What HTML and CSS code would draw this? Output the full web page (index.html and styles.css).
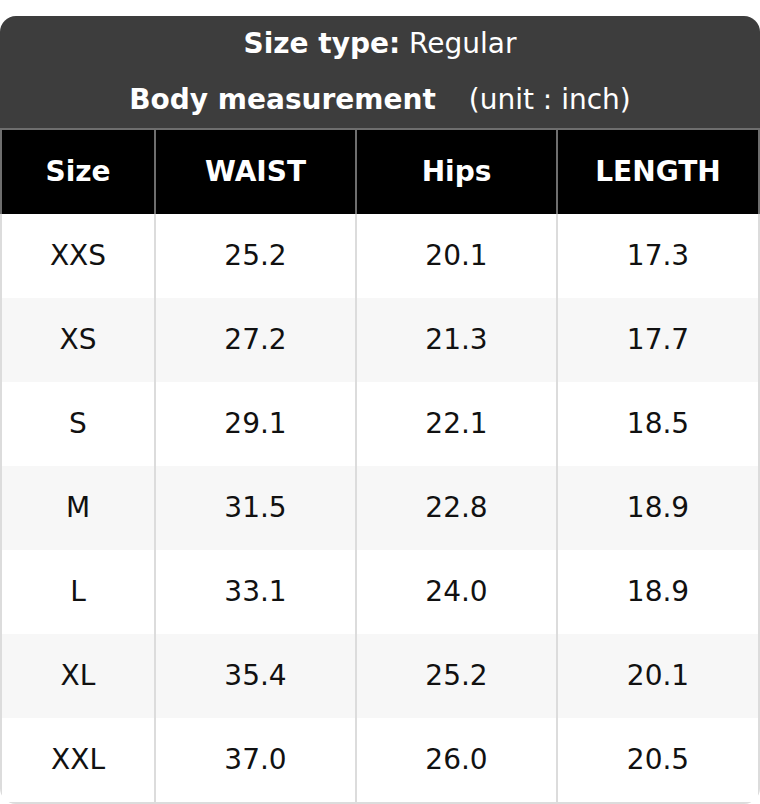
FILE: index.html
```html
<!DOCTYPE html>
<html>
<head>
<meta charset="utf-8">
<link rel="stylesheet" href="styles.css">
</head>
<body>
<div class="card">
  <div class="title">
    <div class="title-line"><b>Size type:</b> Regular</div>
    <div class="title-line"><b>Body measurement</b><span class="unit">(unit : inch)</span></div>
  </div>
  <div class="grid">
    <div class="cell head first">Size</div>
    <div class="cell head">WAIST</div>
    <div class="cell head">Hips</div>
    <div class="cell head last">LENGTH</div>

    <div class="cell first">XXS</div><div class="cell">25.2</div><div class="cell">20.1</div><div class="cell last">17.3</div>
    <div class="cell first alt">XS</div><div class="cell alt">27.2</div><div class="cell alt">21.3</div><div class="cell last alt">17.7</div>
    <div class="cell first">S</div><div class="cell">29.1</div><div class="cell">22.1</div><div class="cell last">18.5</div>
    <div class="cell first alt">M</div><div class="cell alt">31.5</div><div class="cell alt">22.8</div><div class="cell last alt">18.9</div>
    <div class="cell first">L</div><div class="cell">33.1</div><div class="cell">24.0</div><div class="cell last">18.9</div>
    <div class="cell first alt">XL</div><div class="cell alt">35.4</div><div class="cell alt">25.2</div><div class="cell last alt">20.1</div>
    <div class="cell first bottom">XXL</div><div class="cell bottom">37.0</div><div class="cell bottom">26.0</div><div class="cell last bottom">20.5</div>
  </div>
</div>
</body>
</html>
```
FILE: styles.css
```css
html, body {
  margin: 0;
  padding: 0;
  background: #ffffff;
}
body {
  font-family: "DejaVu Sans", sans-serif;
  font-size: 28px;
  color: #111111;
}
.card {
  margin-top: 16px;
  width: 760px;
  border-radius: 16px;
  overflow: hidden;
  background: #ffffff;
}
.title {
  background: #3d3d3d;
  color: #ffffff;
  border-bottom: 2px solid #6e6e6e;
}
.title-line {
  height: 56px;
  line-height: 56px;
  text-align: center;
}
.title-line b {
  font-weight: bold;
}
.unit {
  margin-left: 33px;
}
.grid {
  display: grid;
  grid-template-columns: 156px 201px 201px 202px;
}
.cell {
  height: 84px;
  padding-bottom: 2px;
  display: flex;
  align-items: center;
  justify-content: center;
  border-right: 2px solid #dcdcdc;
  box-sizing: border-box;
}
.cell.first {
  border-left: 2px solid #dcdcdc;
}
.cell.alt {
  background: #f7f7f7;
}
.cell.bottom {
  border-bottom: 2px solid #dcdcdc;
  height: 86px;
}
.cell.head {
  background: #000000;
  color: #ffffff;
  font-weight: bold;
  border-color: #6e6e6e;
}
```
